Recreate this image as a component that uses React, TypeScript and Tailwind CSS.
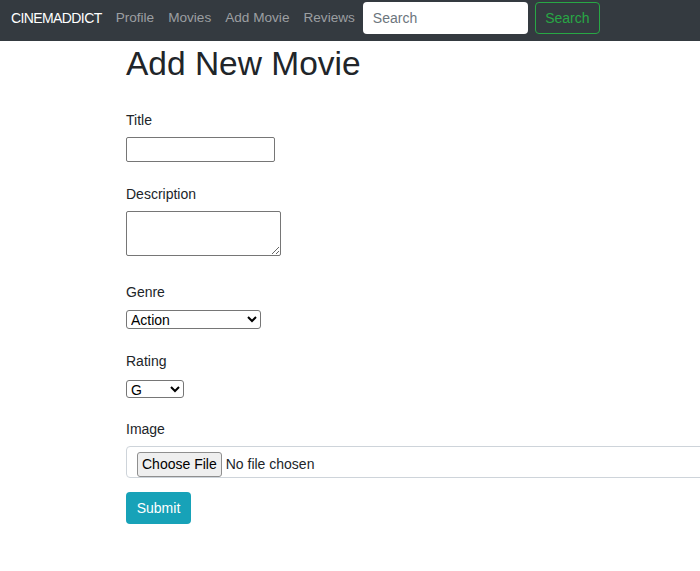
import { useState } from "react";

const NAV_LINKS = ["Profile", "Movies", "Add Movie", "Reviews"];
const GENRES = ["Action", "Comedy", "Drama", "Horror", "Sci-Fi", "Romance"];
const RATINGS = ["G", "PG", "PG-13", "R", "NC-17"];

function Navbar() {
  return (
    <nav className="flex h-[41px] items-start bg-[#343a40] pl-[11px] pt-[2px]">
      <div className="flex h-[32px] items-center gap-[14px]">
        <a className="text-[14px] tracking-[-0.6px] text-white">CINEMADDICT</a>
        {NAV_LINKS.map((l) => (
          <a key={l} className="text-[13.6px] text-[#9c9fa2]">
            {l}
          </a>
        ))}
      </div>
      <input
        placeholder="Search"
        className="ml-[8px] h-[32px] w-[165px] rounded-[4px] bg-white px-[10px] text-[14px] text-[#212529] placeholder:text-[#6c757d] outline-none"
      />
      <button className="ml-[7px] h-[32px] w-[65px] rounded-[4px] border border-[#28a745] text-[14px] text-[#28a745]">
        Search
      </button>
    </nav>
  );
}

function Label({ children, className = "" }: { children: string; className?: string }) {
  return <label className={`block h-[21px] text-[14px] leading-[21px] text-[#212529] ${className}`}>{children}</label>;
}

export default function App() {
  const [genre, setGenre] = useState("Action");
  const [rating, setRating] = useState("G");

  return (
    <div className="min-h-screen w-full overflow-x-hidden bg-white font-['Liberation_Sans',Arial,sans-serif] text-[#212529]">
      <Navbar />
      <main className="pl-[126px]">
        <h1 className="mt-[2px] h-[41px] text-[33.5px] leading-[41px] text-[#212529]">Add New Movie</h1>
        <form onSubmit={(e) => e.preventDefault()}>
          <Label className="mt-[26px]">Title</Label>
          <input
            type="text"
            className="mt-[6px] block h-[25px] w-[149px] rounded-[2px] border border-[#767676] px-[2px] text-[14px]"
          />

          <Label className="mt-[22px]">Description</Label>
          <textarea className="mt-[6px] block h-[45px] w-[155px] rounded-[2px] border border-[#767676] px-[2px] text-[14px]" />

          <Label className="mt-[26px]">Genre</Label>
          <select
            value={genre}
            onChange={(e) => setGenre(e.target.value)}
            className="mt-[7px] block h-[19px] w-[135px] rounded-[3px] border border-[#767676] bg-white text-[14px] leading-[16px] text-black"
          >
            {GENRES.map((g) => (
              <option key={g}>{g}</option>
            ))}
          </select>

          <Label className="mt-[22px]">Rating</Label>
          <select
            value={rating}
            onChange={(e) => setRating(e.target.value)}
            className="mt-[8px] block h-[18px] w-[58px] rounded-[3px] border border-[#767676] bg-white text-[14px] leading-[16px] text-black"
          >
            {RATINGS.map((r) => (
              <option key={r}>{r}</option>
            ))}
          </select>

          <Label className="mt-[21px]">Image</Label>
          <div className="mt-[6px] h-[32px] w-[640px] rounded-[4px] border border-[#ced4da] pl-[10px] pt-[5px]">
            <input
              type="file"
              className="block text-[14px] text-[#212529] file:mr-[4px] file:h-[25px] file:rounded-[3px] file:border file:border-[#8f8f8f] file:bg-[#efefef] file:px-[4px] file:text-[14px] file:text-black"
            />
          </div>

          <button
            type="submit"
            className="mt-[14px] block h-[32px] w-[65px] rounded-[4px] bg-[#17a2b8] text-[14px] text-white"
          >
            Submit
          </button>
        </form>
      </main>
    </div>
  );
}
